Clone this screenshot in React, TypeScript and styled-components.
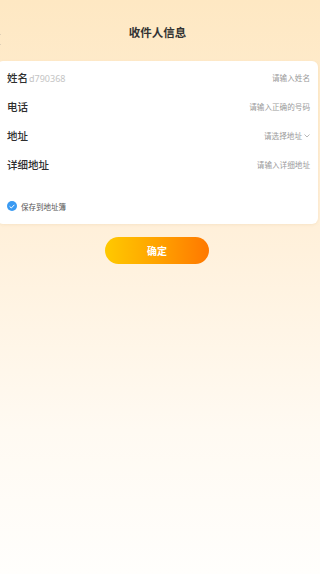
import React from "react";
import styled, { createGlobalStyle } from "styled-components";

const Global = createGlobalStyle`
  html, body { margin: 0; padding: 0; }
  body {
    width: 320px;
    min-height: 574px;
    overflow: hidden;
    background: linear-gradient(180deg, #fee8c3 0%, #fff0da 40%, #fffaf2 75%, #fffefc 100%);
    font-family: "Noto Sans CJK SC", "Noto Sans", sans-serif;
  }
`;

const Page = styled.div`
  width: 321px;
  margin-left: -3px;
  min-height: 574px;
  display: flex;
  flex-direction: column;
`;

const Header = styled.div`
  height: 61px;
  display: flex;
  align-items: center;
  justify-content: center;
  position: relative;
`;

const Back = styled.div`
  position: absolute;
  left: -3px;
  top: 26px;
  width: 11px;
  height: 11px;
`;

const Title = styled.div`
  font-size: 11.5px;
  font-weight: 700;
  color: #333;
  margin-top: 2px;
`;

const Card = styled.div`
  background: #fff;
  border-radius: 6px;
  box-shadow: 0 1px 3px rgba(200, 160, 100, 0.15);
  padding: 2px 8px 11px 10px;
  display: flex;
  flex-direction: column;
`;

const Row = styled.div`
  height: 29px;
  display: flex;
  align-items: center;
  justify-content: space-between;
`;

const Left = styled.div`
  display: flex;
  align-items: baseline;
`;

const Label = styled.span`
  font-size: 10.5px;
  font-weight: 500;
  color: #2e2e2e;
`;

const Value = styled.span`
  font-family: "Noto Sans", sans-serif;
  font-size: 9px;
  color: #c4c4c4;
  margin-left: 1px;
`;

const Placeholder = styled.span`
  font-size: 7.6px;
  color: #9a9a9a;
  display: flex;
  align-items: center;
  gap: 2px;
`;

const CheckRow = styled.div`
  margin-top: 20px;
  height: 14px;
  display: flex;
  align-items: center;
  gap: 4px;
`;

const Check = styled.div`
  width: 10px;
  height: 10px;
  border-radius: 50%;
  background: #3a9af2;
  display: flex;
  align-items: center;
  justify-content: center;
`;

const CheckText = styled.span`
  font-size: 7.5px;
  color: #555;
`;

const ButtonWrap = styled.div`
  display: flex;
  justify-content: center;
  margin-top: 13px;
  padding-right: 1px;
`;

const Button = styled.button`
  width: 104px;
  height: 27px;
  border: none;
  border-radius: 14px;
  background: linear-gradient(90deg, #ffc900 0%, #ffa300 50%, #ff7800 100%);
  color: #fff;
  font-family: "Noto Sans CJK SC", sans-serif;
  font-size: 10px;
  font-weight: 700;
  padding: 0;
`;

const rows = [
  { label: "姓名", value: "d790368", placeholder: "请输入姓名" },
  { label: "电话", placeholder: "请输入正确的号码" },
  { label: "地址", placeholder: "请选择地址", arrow: true },
  { label: "详细地址", placeholder: "请输入详细地址" },
];

export default function App() {
  return (
    <>
      <Global />
      <Page>
        <Header>
          <Back>
            <svg width="11" height="11" viewBox="0 0 11 11" fill="none">
              <path d="M6 0.5 L1 5.5 L6 10.5" stroke="#888" strokeWidth="1" />
            </svg>
          </Back>
          <Title>收件人信息</Title>
        </Header>
        <Card>
          {rows.map((r) => (
            <Row key={r.label}>
              <Left>
                <Label>{r.label}</Label>
                {r.value && <Value>{r.value}</Value>}
              </Left>
              <Placeholder>
                {r.placeholder}
                {r.arrow && (
                  <svg width="6" height="4" viewBox="0 0 6 4" fill="none">
                    <path d="M0.5 0.5 L3 3 L5.5 0.5" stroke="#999" strokeWidth="0.7" />
                  </svg>
                )}
              </Placeholder>
            </Row>
          ))}
          <CheckRow>
            <Check>
              <svg width="6" height="5" viewBox="0 0 6 5" fill="none">
                <path d="M0.6 2.4 L2.3 4 L5.4 0.8" stroke="#fff" strokeWidth="1" />
              </svg>
            </Check>
            <CheckText>保存到地址簿</CheckText>
          </CheckRow>
        </Card>
        <ButtonWrap>
          <Button>确定</Button>
        </ButtonWrap>
      </Page>
    </>
  );
}
